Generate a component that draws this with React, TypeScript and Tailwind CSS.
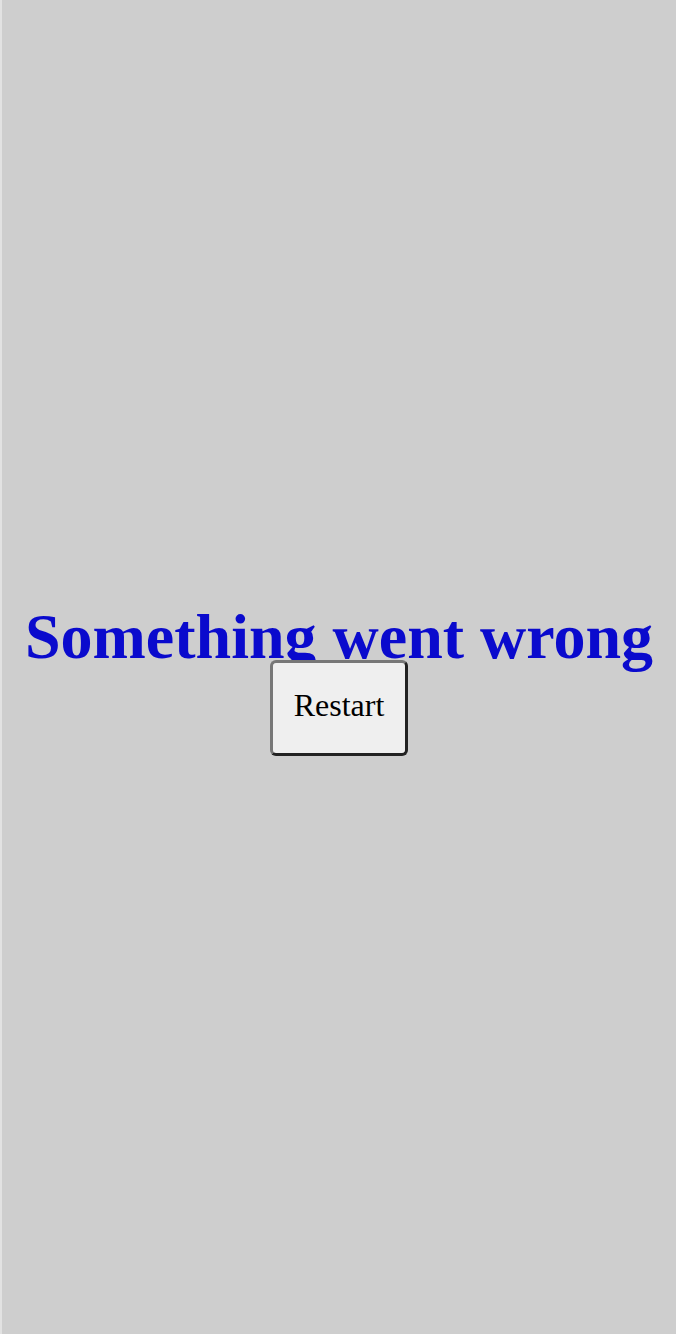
export default function App() {
  return (
    <div className="flex min-h-screen bg-[#cecece]" style={{ fontFamily: '"Liberation Serif", "Times New Roman", serif' }}>
      <div className="w-[2px] shrink-0 bg-[#e2e2e2]" />
      <div className="flex flex-1 flex-col items-center justify-center pt-[35px]">
        <h1 className="text-[64px] leading-[47px] font-bold text-[#0a0acd] whitespace-nowrap">
          Something went wrong
        </h1>
        <button
          type="button"
          className="rounded-[6px] border-[3px] border-t-[#777777] border-l-[#777777] border-b-[#222222] border-r-[#222222] bg-[#efefef] px-[21px] pt-[24px] pb-[29px] text-[32px] leading-[37px] text-black"
        >
          Restart
        </button>
      </div>
    </div>
  )
}
